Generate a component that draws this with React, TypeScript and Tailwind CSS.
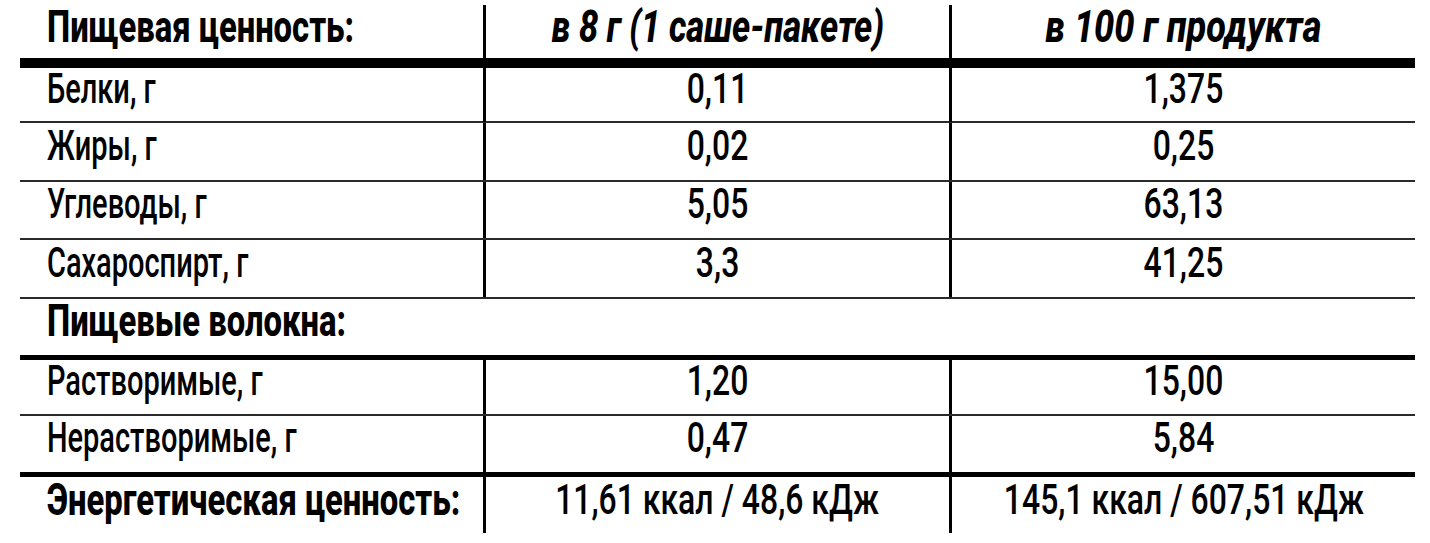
import React from 'react';

type Row = {
  label: string;
  perSachet: string;
  per100: string;
  rowClass: string;
};

const font = { fontFamily: 'Roboto, "Liberation Sans", sans-serif' };

const rows: Row[] = [
  { label: 'Белки, г', perSachet: '0,11', per100: '1,375', rowClass: 'h-[55px] border-b-2 border-[#2a2a2a]' },
  { label: 'Жиры, г', perSachet: '0,02', per100: '0,25', rowClass: 'h-[59px] border-b-2 border-[#2a2a2a]' },
  { label: 'Углеводы, г', perSachet: '5,05', per100: '63,13', rowClass: 'h-[58px] border-b-2 border-[#2a2a2a]' },
  { label: 'Сахароспирт, г', perSachet: '3,3', per100: '41,25', rowClass: 'h-[59px] border-b-2 border-[#2a2a2a]' },
];

const fiberRows: Row[] = [
  { label: 'Растворимые, г', perSachet: '1,20', per100: '15,00', rowClass: 'h-[56px] border-b-2 border-[#2a2a2a]' },
  { label: 'Нерастворимые, г', perSachet: '0,47', per100: '5,84', rowClass: 'h-[61px] border-b-[5px] border-black' },
];

// label text is narrower than the digits in the original condensed face
const Label: React.FC<{ children: React.ReactNode }> = ({ children }) => (
  <span className="inline-block whitespace-nowrap leading-none scale-x-[0.69] origin-left">{children}</span>
);

const Num: React.FC<{ children: React.ReactNode }> = ({ children }) => (
  <span className="inline-block whitespace-nowrap leading-none scale-x-[0.76] origin-center">{children}</span>
);

const Heading: React.FC<{ children: React.ReactNode }> = ({ children }) => (
  <span className="inline-block whitespace-nowrap leading-none scale-x-[0.745] origin-left">{children}</span>
);

const DataRow: React.FC<{ row: Row }> = ({ row }) => (
  <div className={`grid grid-cols-[463px_466px_466px] ${row.rowClass}`}>
    <div className="flex items-center pl-[27px] pb-[12px] text-[42px] font-medium text-black">
      <Label>{row.label}</Label>
    </div>
    <div className="flex items-center justify-center border-l-[3px] border-black pb-[12px] text-[42px] font-medium text-black">
      <Num>{row.perSachet}</Num>
    </div>
    <div className="flex items-center justify-center border-l-[3px] border-black pb-[12px] text-[42px] font-medium text-black">
      <Num>{row.per100}</Num>
    </div>
  </div>
);

export default function App() {
  return (
    <div className="w-[1430px] h-[543px] bg-white px-[20px] pt-[5px] overflow-hidden" style={font}>
      <div className="w-[1395px]">
        {/* Header */}
        <div className="grid grid-cols-[463px_466px_466px] h-[63px] border-b-[10px] border-black">
          <div className="flex items-center pl-[27px] pb-[13px] text-[44px] font-extrabold text-black">
            <Heading>Пищевая ценность:</Heading>
          </div>
          <div className="flex items-center justify-center border-l-[3px] border-black pb-[13px] text-[44px] font-extrabold italic text-black">
            <span className="inline-block whitespace-nowrap leading-none scale-x-[0.785]">в 8 г (1 саше-пакете)</span>
          </div>
          <div className="flex items-center justify-center border-l-[3px] border-black pb-[13px] text-[44px] font-extrabold italic text-black">
            <span className="inline-block whitespace-nowrap leading-none scale-x-[0.82]">в 100 г продукта</span>
          </div>
        </div>

        {rows.map((row) => (
          <DataRow key={row.label} row={row} />
        ))}

        {/* Fiber section */}
        <div className="flex items-center h-[61px] border-b-[5px] border-black pl-[27px] pb-[13px] text-[44px] font-extrabold text-black">
          <Heading>Пищевые волокна:</Heading>
        </div>

        {fiberRows.map((row) => (
          <DataRow key={row.label} row={row} />
        ))}

        {/* Energy */}
        <div className="grid grid-cols-[463px_466px_466px] h-[56px]">
          <div className="flex items-center pl-[27px] pb-[11px] text-[44px] font-extrabold text-black">
            <Heading>Энергетическая ценность:</Heading>
          </div>
          <div className="flex items-center justify-center border-l-[3px] border-black pb-[10px] text-[42px] font-medium text-black">
            <Num>11,61 ккал / 48,6 кДж</Num>
          </div>
          <div className="flex items-center justify-center border-l-[3px] border-black pb-[10px] text-[42px] font-medium text-black">
            <Num>145,1 ккал / 607,51 кДж</Num>
          </div>
        </div>
      </div>
    </div>
  );
}
